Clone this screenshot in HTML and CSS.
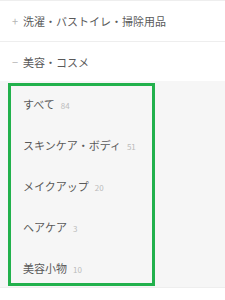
FILE: index.html
```html
<!DOCTYPE html>
<html lang="ja">
<head>
<meta charset="utf-8">
<link rel="stylesheet" href="styles.css">
</head>
<body>
<div class="menu">
  <div class="row"><span class="sign">+</span><span class="label">洗濯・バストイレ・掃除用品</span></div>
  <div class="row open"><span class="sign">−</span><span class="label">美容・コスメ</span></div>
  <div class="panel">
    <ul class="sub">
      <li class="item"><span class="name">すべて</span><span class="count">84</span></li>
      <li class="item"><span class="name">スキンケア・ボディ</span><span class="count">51</span></li>
      <li class="item"><span class="name">メイクアップ</span><span class="count">20</span></li>
      <li class="item"><span class="name">ヘアケア</span><span class="count">3</span></li>
      <li class="item"><span class="name">美容小物</span><span class="count">10</span></li>
    </ul>
  </div>
</div>
</body>
</html>
```
FILE: styles.css
```css
html, body {
  margin: 0;
  padding: 0;
  background: #fff;
}
body {
  font-family: "Noto Sans CJK JP", "Noto Sans", sans-serif;
  color: #555;
  width: 225px;
  height: 300px;
  overflow: hidden;
}
.menu {
  border-top: 1px solid #eeeeee;
}
.row {
  height: 40px;
  display: flex;
  align-items: center;
  padding-left: 12px;
  font-size: 11px;
  border-bottom: 1px solid #eeeeee;
}
.row.open {
  height: 39px;
  border-bottom: none;
}
.sign {
  width: 11px;
  color: #b5b5b5;
  font-size: 11px;
}
.label {
  color: #595959;
}
.panel {
  background: #f6f6f6;
  padding: 2px 0 1px 8px;
  border-bottom: 1px solid #eeeeee;
}
.sub {
  list-style: none;
  margin: 0;
  padding: 0;
  width: 141px;
  border: 3px solid #22b14c;
}
.item {
  height: 41px;
  box-sizing: border-box;
  padding: 10px 0 0 12px;
  line-height: 16px;
  font-size: 11px;
  display: flex;
  align-items: baseline;
}
.item:last-child {
  height: 33px;
}
.name {
  color: #595959;
}
.count {
  margin-left: 6px;
  font-size: 8px;
  color: #bbb;
}
```
